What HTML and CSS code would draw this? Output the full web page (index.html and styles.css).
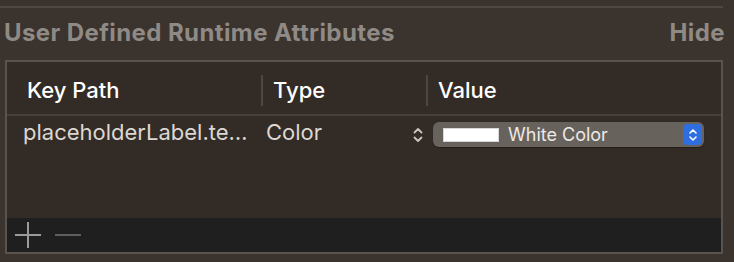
FILE: index.html
```html
<!DOCTYPE html>
<html lang="en">
  <head>
    <meta charset="UTF-8" />
    <title>User Defined Runtime Attributes</title>
    <link rel="stylesheet" href="styles.css">
  </head>
  <body>
    <div class="rule"></div>
    <div class="section-head">
      <span class="section-title">User Defined Runtime Attributes</span>
      <span class="section-toggle">Hide</span>
    </div>

    <div class="attr-table">
      <div class="attr-head">
        <div class="cell">Key Path</div>
        <div class="cell"><span class="sep"></span>Type</div>
        <div class="cell"><span class="sep"></span>Value</div>
      </div>
      <div class="attr-body">
        <div class="attr-row">
          <div class="cell key">placeholderLabel.te…</div>
          <div class="cell type">
            <span>Color</span>
            <svg class="stepper" width="10" height="16" viewBox="0 0 10 16">
              <path d="M1.5 5.5 L5 2 L8.5 5.5 M1.5 10.5 L5 14 L8.5 10.5" fill="none" stroke="#c9c4bf" stroke-width="1.8" stroke-linecap="round" stroke-linejoin="round"/>
            </svg>
          </div>
          <div class="cell value">
            <div class="popup">
              <span class="swatch"></span>
              <span class="popup-label">White Color</span>
              <span class="popup-arrows">
                <svg width="10" height="14" viewBox="0 0 10 14">
                  <path d="M2 5 L5 2 L8 5 M2 9 L5 12 L8 9" fill="none" stroke="#ffffff" stroke-width="1.6" stroke-linecap="round" stroke-linejoin="round"/>
                </svg>
              </span>
            </div>
          </div>
        </div>
      </div>
      <div class="attr-foot">
        <svg width="28" height="28" viewBox="0 0 28 28">
          <path d="M1 14 H27 M14 1 V27" stroke="#9b9b9b" stroke-width="2"/>
        </svg>
        <svg width="28" height="28" viewBox="0 0 28 28">
          <path d="M1 14 H27" stroke="#5f5f5f" stroke-width="2"/>
        </svg>
      </div>
    </div>
  </body>
</html>
```

FILE: styles.css
```css
body {
  margin: 0;
  width: 734px;
  height: 262px;
  overflow: hidden;
  background-color: #3b332d;
  font-family: Inter, "Liberation Sans", sans-serif;
  color: #ece8e4;
}
.rule {
  margin: 6px 11px 0 0;
  height: 2px;
  background-color: #4e4742;
}
.section-head {
  display: flex;
  justify-content: space-between;
  align-items: baseline;
  padding: 12px 9px 0 4px;
  height: 38px;
  box-sizing: border-box;
  font-size: 24px;
  font-weight: 700;
  line-height: 26px;
  letter-spacing: 0.4px;
  color: #8f8a86;
}
.attr-table {
  margin: 14px 11px 0 5px;
  height: 194px;
  box-sizing: border-box;
  border: 2px solid #59534f;
  background-color: #332b26;
  display: flex;
  flex-direction: column;
}
.attr-head,
.attr-row {
  display: grid;
  grid-template-columns: 254px 165px 1fr;
}
.attr-head {
  height: 52px;
  border-bottom: 2px solid #463f3a;
  font-size: 22px;
  font-weight: 500;
  color: #ffffff;
}
.attr-head .cell {
  display: flex;
  align-items: center;
  gap: 10px;
  padding-top: 4px;
}
.attr-head .cell:first-child {
  padding-left: 20px;
}
.sep {
  width: 2px;
  height: 31px;
  background-color: #4d4641;
}
.attr-body {
  flex: 1;
}
.attr-row {
  height: 25px;
  margin-top: 6px;
  font-size: 22px;
  color: #dcd7d2;
}
.attr-row .cell {
  display: flex;
  align-items: center;
}
.cell.key {
  padding-left: 16px;
  margin-top: -5px;
}
.cell.type {
  justify-content: space-between;
  padding: 0 3px 0 5px;
}
.cell.type span {
  margin-top: -5px;
}
.cell.value {
  padding: 0 17px 0 7px;
}
.popup {
  flex: 1;
  height: 25px;
  display: flex;
  align-items: center;
  background-color: #68625d;
  border-radius: 6px;
  padding: 0 2px 0 10px;
  box-shadow: 0 1px 1px rgba(0, 0, 0, 0.3);
}
.swatch {
  width: 54px;
  height: 12px;
  background-color: #ffffff;
  border: 1px solid #d8d8d8;
}
.popup-label {
  flex: 1;
  margin-left: 9px;
  font-size: 18px;
  color: #ece9e6;
}
.popup-arrows {
  width: 19px;
  height: 21px;
  border-radius: 4px;
  background-color: #2f6ede;
  display: flex;
  align-items: center;
  justify-content: center;
}
.attr-foot {
  height: 34px;
  background-color: #1f1f1f;
  display: flex;
  align-items: center;
  gap: 12px;
  padding-left: 7px;
}
```
